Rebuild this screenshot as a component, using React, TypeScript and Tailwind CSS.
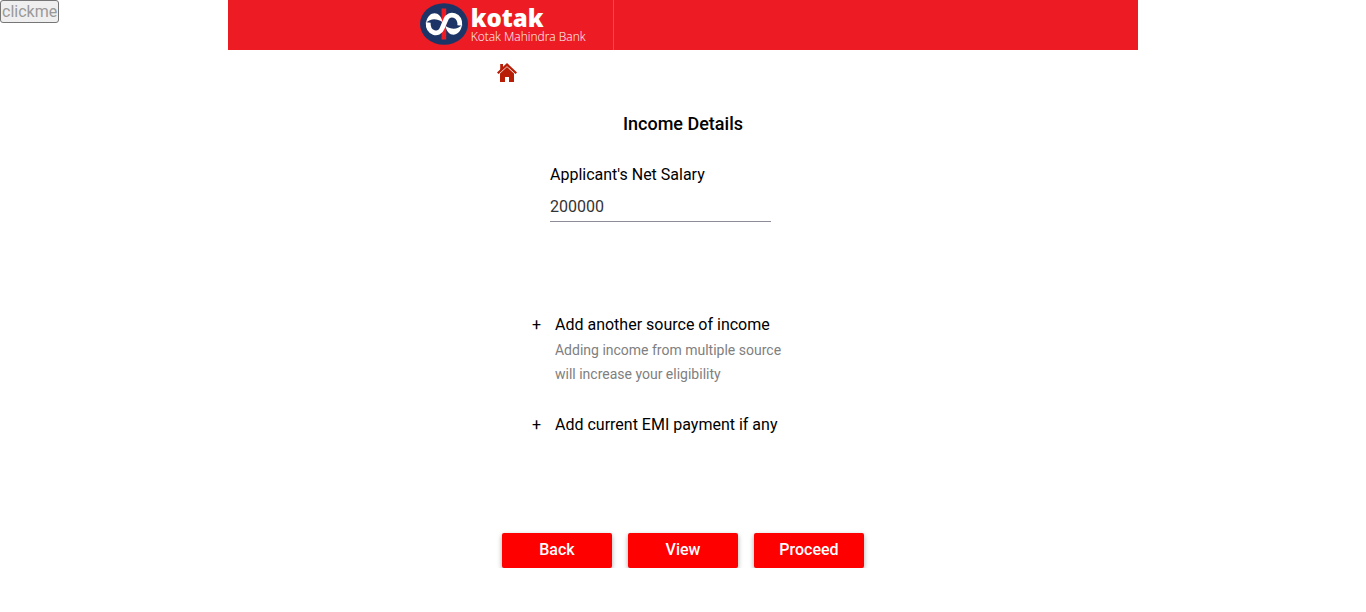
import { useState } from "react";

function BankLogo() {
  return (
    <a href="#" className="flex items-start gap-[3px]" aria-label="Kotak Mahindra Bank">
      <svg className="h-[42px] w-12 shrink-0" viewBox="0 0 48 42" aria-hidden="true">
        <ellipse cx="24" cy="21" rx="24" ry="20.8" fill="#1d3566" />
        <path d="M21.6 5.5H26.2V36.5H21.6Z" fill="#ed1c24" />
        <g fill="#fff">
          <path d="M22.5 19C20.5 7 8 7.5 6 20C10.5 15.5 16 15 22.5 19Z" />
          <path d="M25.5 23C27.5 35 40 34.5 42 22C37.5 26.5 32 27 25.5 23Z" />
        </g>
        <path
          d="M8.2 19.5C7.6 30 18.8 33.5 22.2 25.2L25.8 16.8C29.2 8.5 40.4 12 39.8 22.5"
          fill="none"
          stroke="#fff"
          strokeWidth="4.8"
        />
      </svg>
      <span className="flex flex-col pt-0.5 font-['Open_Sans',sans-serif] text-white">
        <span className="text-[24px] leading-[26px] font-extrabold">kotak</span>
        <span className="text-[12px] leading-3 font-light">Kotak Mahindra Bank</span>
      </span>
    </a>
  );
}

function HomeIcon() {
  return (
    <svg className="size-5" viewBox="0 0 20 20" fill="#b81d06" aria-hidden="true">
      <path d="M10 4L17 10.4V19H12V14H8V19H3V10.4Z" />
      <path d="M3.2 1H6V5L3.2 7.6Z" />
      <path d="M10 0L20 9.4L18.5 11L10 3.2L1.5 11L0 9.4Z" />
    </svg>
  );
}

function AddRow({ title, note }: { title: string; note?: string }) {
  return (
    <div className="flex gap-3.5">
      <button type="button" aria-label={title} className="h-6 w-[9px] text-center text-[16px] leading-6">
        +
      </button>
      <div>
        <p className="text-[16px] leading-6">{title}</p>
        {note && <p className="mt-px w-60 text-[14px] leading-6 text-[#808080]">{note}</p>}
      </div>
    </div>
  );
}

const actions = ["Back", "View", "Proceed"];

export default function App() {
  const [salary, setSalary] = useState("200000");

  return (
    <div className="grid grid-cols-[1fr_4fr_1fr] items-start bg-white font-[Roboto,sans-serif] text-black">
      <button
        type="button"
        disabled
        className="justify-self-start rounded-[3px] border border-[#767676] bg-[#efefef] px-px text-[16px] leading-[21px] text-[#999]"
      >
        clickme
      </button>

      <div>
        <header className="flex h-[50px] bg-[#ed1c24]">
          <div className="flex h-full w-[386px] items-start border-r border-[#f1494f] pt-[3px] pl-48">
            <BankLogo />
          </div>
        </header>

        <main className="mx-auto w-[372px] pt-[13px]">
          <a href="#" aria-label="Home" className="block size-5">
            <HomeIcon />
          </a>

          <h1 className="mt-[29px] text-center text-[18px] leading-6 font-medium">Income Details</h1>

          <div className="mt-[27px] ml-[53px] w-[221px]">
            <label htmlFor="salary" className="block text-[16px] leading-6">
              Applicant's Net Salary
            </label>
            <input
              id="salary"
              value={salary}
              onChange={(e) => setSalary(e.target.value)}
              className="mt-1 block h-[31px] w-full border-b border-[#8e8c99] text-[16px] text-[#333] outline-none"
            />
          </div>

          <div className="mt-[91px] ml-[35px] flex flex-col gap-[27px]">
            <AddRow title="Add another source of income" note="Adding income from multiple source will increase your eligibility" />
            <AddRow title="Add current EMI payment if any" />
          </div>

          <div className="mt-24 flex justify-center gap-4">
            {actions.map((name) => (
              <button
                key={name}
                type="button"
                className="h-[35px] w-[110px] rounded-[2px] bg-[#ff0000] pb-0.5 text-[16px] leading-[33px] font-medium text-white shadow-[0_2px_5px_rgba(0,0,0,0.35)]"
              >
                {name}
              </button>
            ))}
          </div>
        </main>
      </div>
    </div>
  );
}
